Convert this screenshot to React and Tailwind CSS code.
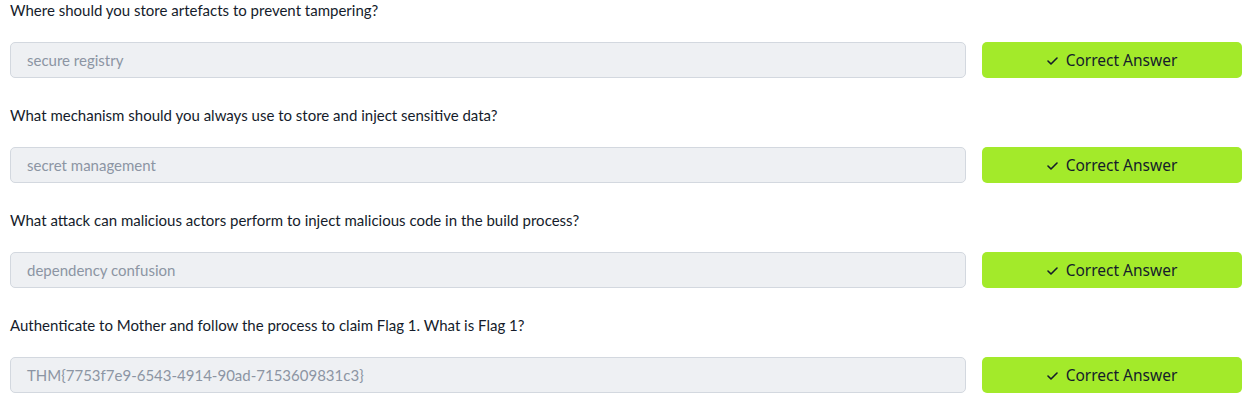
const questions = [
  {
    q: "Where should you store artefacts to prevent tampering?",
    a: "secure registry",
  },
  {
    q: "What mechanism should you always use to store and inject sensitive data?",
    a: "secret management",
  },
  {
    q: "What attack can malicious actors perform to inject malicious code in the build process?",
    a: "dependency confusion",
  },
  {
    q: "Authenticate to Mother and follow the process to claim Flag 1. What is Flag 1?",
    a: "THM{7753f7e9-6543-4914-90ad-7153609831c3}",
  },
];

function CheckIcon() {
  return (
    <svg width="11" height="8" viewBox="0 0 11 8" fill="none" className="mr-[8px]">
      <path d="M1 4l3 3 6-6" stroke="#151c2b" strokeWidth="1.6" strokeLinecap="round" strokeLinejoin="round" />
    </svg>
  );
}

function QuestionRow({ q, a }) {
  return (
    <div className="flex flex-col">
      <p className="text-[15px] leading-[19px] text-[#151c2b]">{q}</p>
      <div className="mt-[22px] flex gap-4">
        <div className="flex h-9 flex-1 items-center rounded-[5px] border border-[#d3d8df] bg-[#eef0f3] px-4 text-[15px] text-[#8c95a3]">
          {a}
        </div>
        <button
          type="button"
          className="flex h-9 w-[260px] items-center justify-center rounded-[5px] bg-[#a3ea2a] pt-[2px] text-[15.5px] text-[#151c2b]"
          style={{ fontFamily: "'Noto Sans', sans-serif" }}
        >
          <CheckIcon />
          Correct Answer
        </button>
      </div>
    </div>
  );
}

export default function App() {
  return (
    <main
      className="flex min-h-screen flex-col gap-7 bg-white pl-[10px] pr-[11px] pt-[1px]"
      style={{ fontFamily: "Lato, 'Open Sans', sans-serif" }}
    >
      {questions.map((item) => (
        <QuestionRow key={item.q} q={item.q} a={item.a} />
      ))}
    </main>
  );
}
